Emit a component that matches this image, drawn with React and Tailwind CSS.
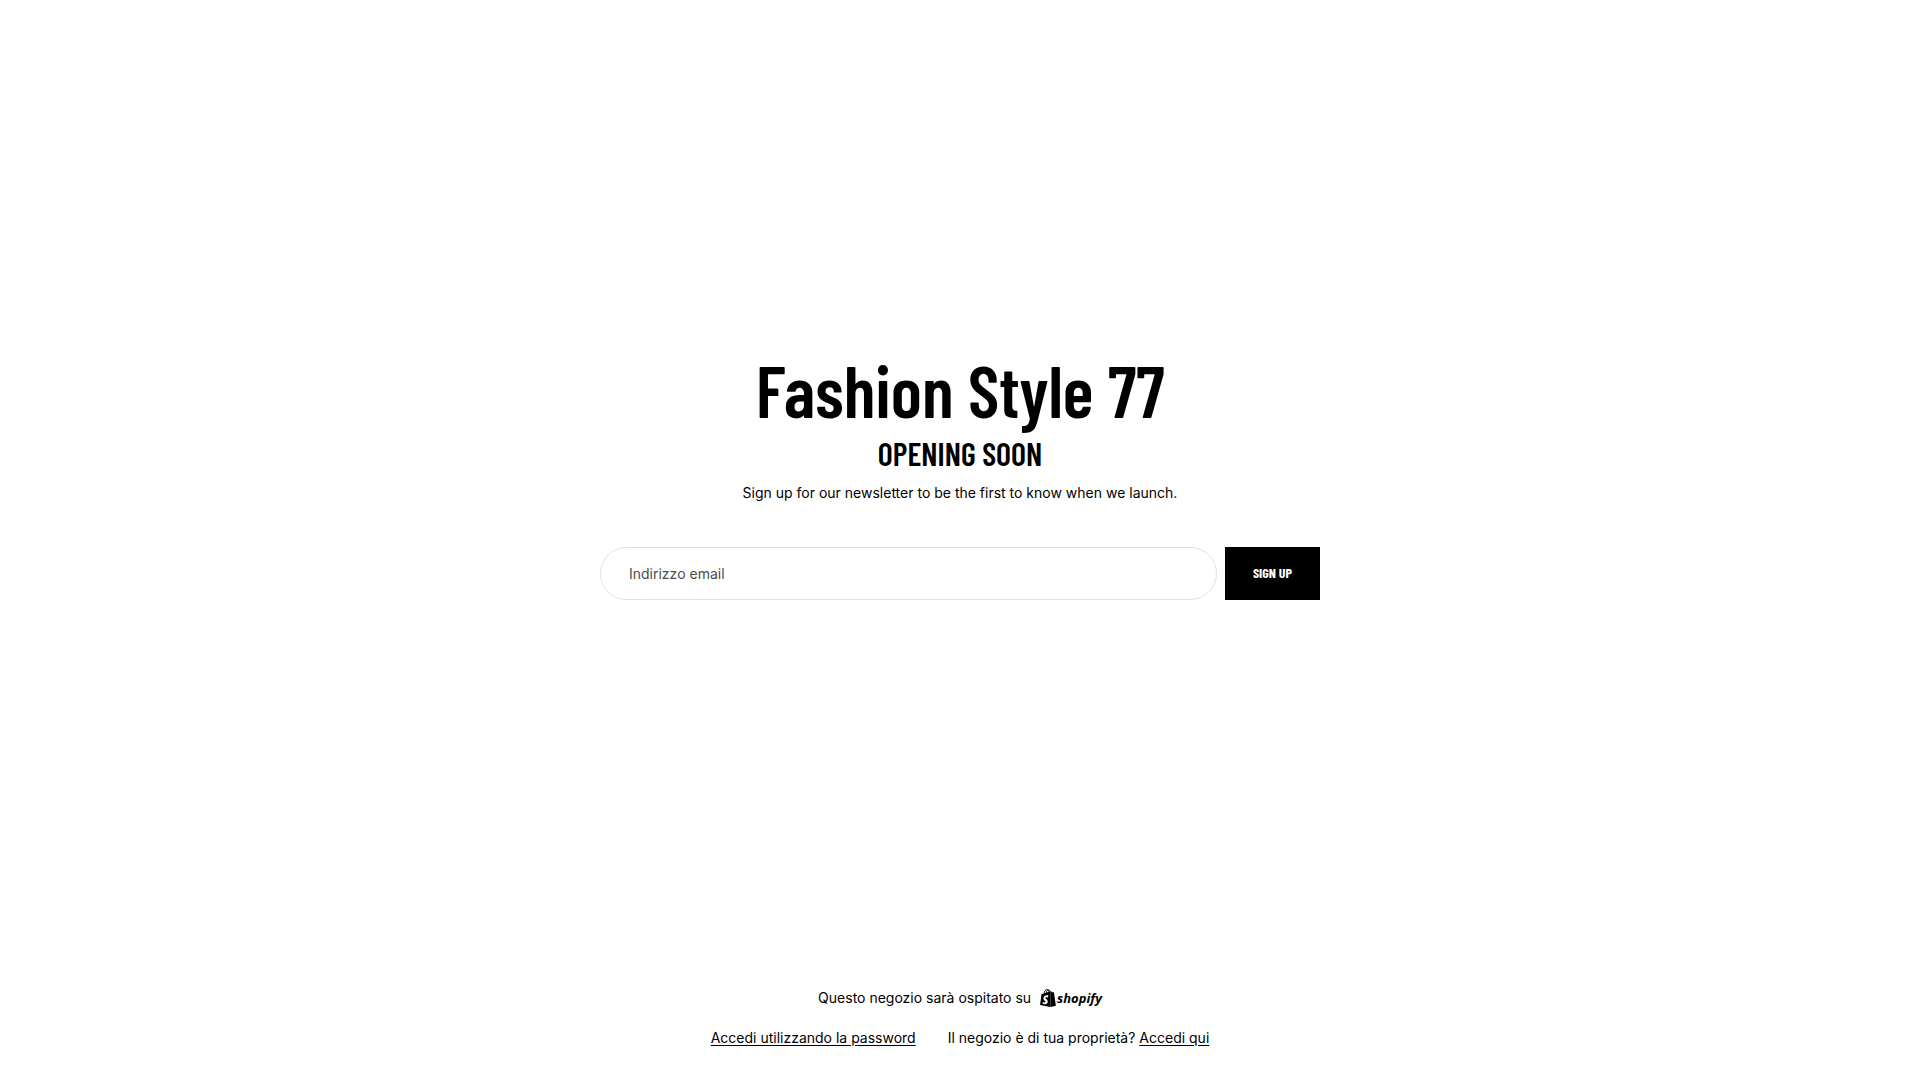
import React, { useState } from "react";
import { SiShopify } from "react-icons/si";

const headingFont = "font-['Barlow_Condensed','Liberation_Sans_Narrow',sans-serif]";

const ShopifyLogo = () => (
  <a href="#shopify" aria-label="Shopify" className="flex items-center">
    <SiShopify className="h-[18px] w-[18px]" aria-hidden="true" />
    <span className="font-['Open_Sans',sans-serif] text-[13px] leading-none font-bold italic">shopify</span>
  </a>
);

const NewsletterForm = () => {
  const [email, setEmail] = useState("");

  return (
    <form className="mt-[42px] flex w-full max-w-[720px] gap-2" onSubmit={(e) => e.preventDefault()}>
      <input
        type="email"
        aria-label="Indirizzo email"
        placeholder="Indirizzo email"
        value={email}
        onChange={(e) => setEmail(e.target.value)}
        className="h-[53px] min-w-0 flex-1 rounded-full border border-[#e1e1e1] px-7 text-sm placeholder:text-[#4d4d4d]"
      />
      <button type="submit" className={`${headingFont} h-[53px] bg-black px-7 text-sm font-bold text-white uppercase`}>
        Sign up
      </button>
    </form>
  );
};

export default function App() {
  return (
    <div className="flex min-h-screen flex-col bg-white font-['Inter',sans-serif] text-sm text-black">
      <main className="flex flex-1 flex-col items-center justify-center px-4 pb-[34px] text-center">
        <h1 className={`${headingFont} text-7xl font-semibold`}>Fashion Style 77</h1>
        <h2 className={`${headingFont} mt-2 text-[32px] leading-10 font-semibold uppercase`}>Opening soon</h2>
        <p className="mt-2 leading-6">Sign up for our newsletter to be the first to know when we launch.</p>
        <NewsletterForm />
      </main>
      <footer className="flex flex-col items-center gap-4 px-4 pb-[30px]">
        <div className="flex items-center gap-2 leading-6">
          <span>Questo negozio sarà ospitato su</span>
          <ShopifyLogo />
        </div>
        <div className="flex flex-wrap justify-center gap-8 leading-6">
          <a href="#password" className="underline underline-offset-2">Accedi utilizzando la password</a>
          <p>
            Il negozio è di tua proprietà?{" "}
            <a href="#login" className="underline underline-offset-2">Accedi qui</a>
          </p>
        </div>
      </footer>
    </div>
  );
}
